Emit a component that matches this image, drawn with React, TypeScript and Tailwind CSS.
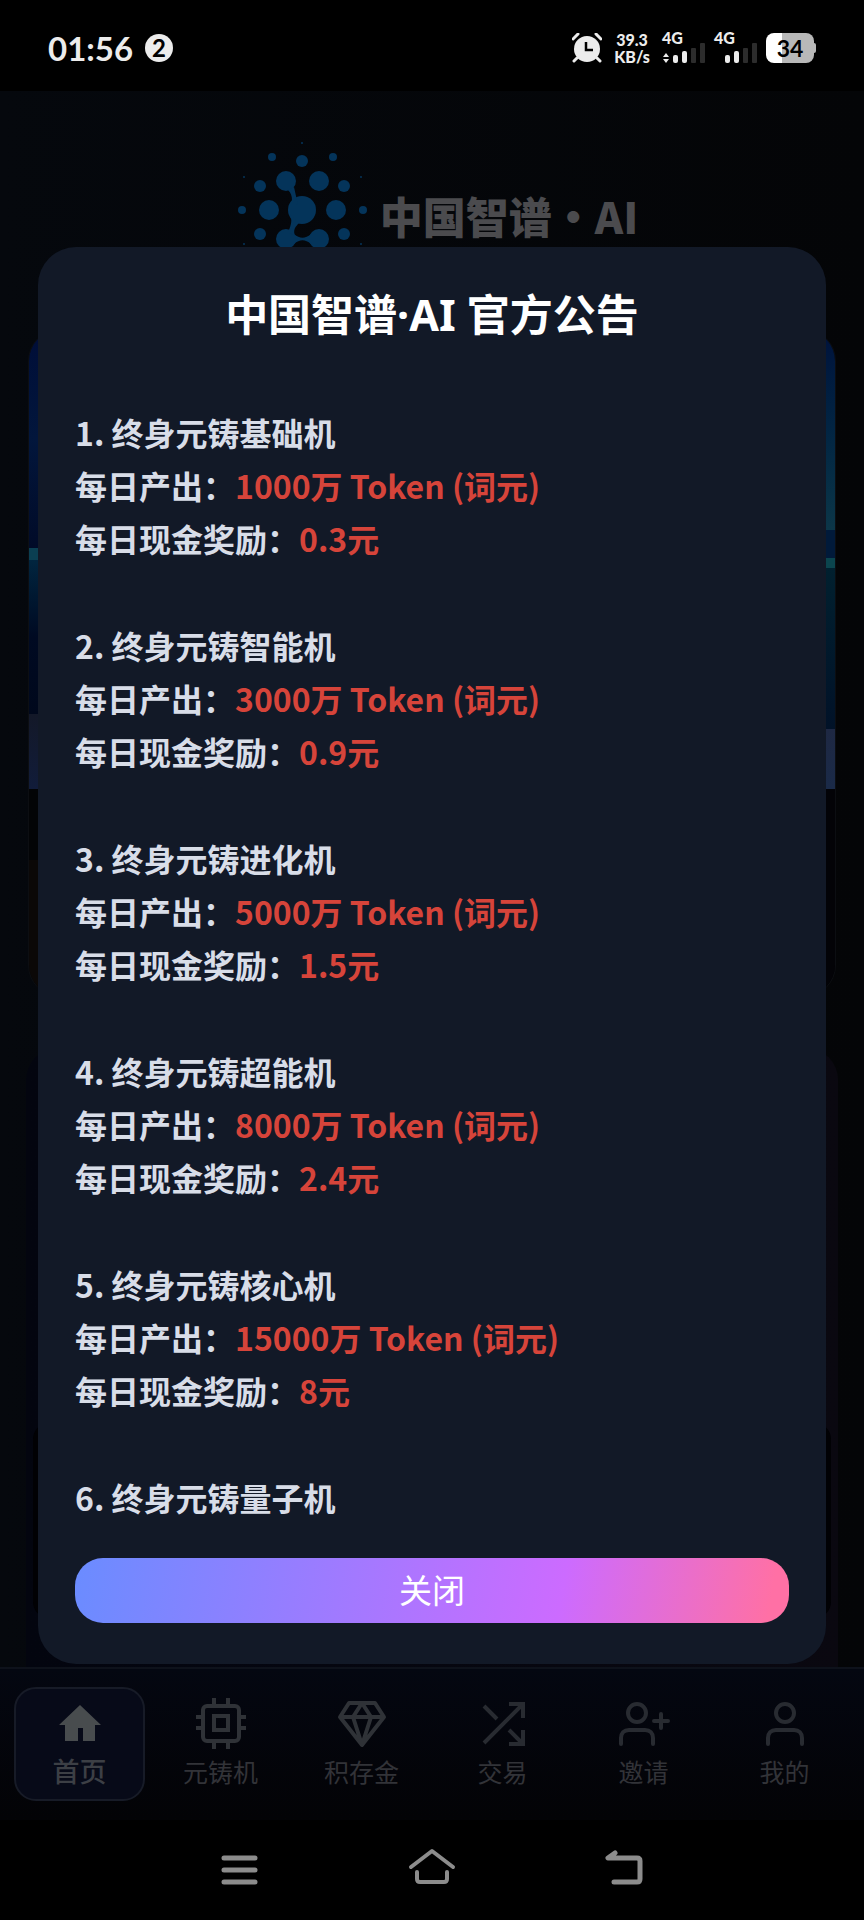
import React, { useState } from 'react';

const machines = [
  { nome: '终身元铸基础机', token: '1000万', cash: '0.3元' },
  { nome: '终身元铸智能机', token: '3000万', cash: '0.9元' },
  { nome: '终身元铸进化机', token: '5000万', cash: '1.5元' },
  { nome: '终身元铸超能机', token: '8000万', cash: '2.4元' },
  { nome: '终身元铸核心机', token: '15000万', cash: '8元' },
  { nome: '终身元铸量子机' },
];

const dots = [
  [302, 143, 1], [272, 157, 4], [333, 157, 4], [302, 161, 6], [286, 181, 10], [319, 181, 10],
  [260, 186, 6], [344, 186, 6], [244, 177, 1], [361, 177, 1], [302, 210, 14], [269, 210, 10],
  [336, 210, 10], [242, 210, 4], [363, 210, 4], [260, 234, 6], [344, 234, 6], [286, 239, 10],
  [319, 239, 10], [244, 244, 1], [361, 244, 1], [302, 259, 6], [272, 263, 4], [333, 263, 4],
];

const Logo = () => (
  <svg className="h-36 w-[130px]" viewBox="238 139 130 144" fill="#04345a">
    {dots.map(([x, y, r]) => (
      <circle key={`${x}-${y}`} cx={x} cy={y} r={r} />
    ))}
    <path d="M288 190c3 3 4 6 4 11l6 4-4-18zM290 214c2 5 2 10-2 18l7 4c-2-6 0-9 4-13zM294 234c6 5 11 5 17 0v10c-6-5-11-5-17 0z" />
  </svg>
);

const AlarmIcon = () => (
  <svg className="h-[30px] w-[30px]" viewBox="0 0 30 30" fill="none">
    <circle cx="15" cy="16" r="13" fill="#ececec" />
    <path d="M5 25l-3 3M25 25l3 3M1 6l5-5M29 6l-5-5" stroke="#ececec" strokeWidth="3" strokeLinecap="round" />
    <path d="M14 9v8h7" stroke="#000" strokeWidth="2.5" />
  </svg>
);

const Signal = ({ data }: { data?: boolean }) => (
  <div className="flex w-[44px] flex-col">
    <span className="h-[10px] text-[16px] leading-[10px] font-black">4G</span>
    <svg className="h-5 w-[44px]" viewBox="0 0 44 20">
      {data && <path d="M1 14l3-4 3 4zM1 16h6l-3 4z" fill="#ececec" />}
      <rect x="11" y="12" width="5" height="8" rx="2" fill="#ececec" />
      <rect x="20" y="8" width="5" height="12" rx="2" fill="#ececec" />
      <rect x="29" y="5" width="5" height="15" rx="1" fill="#2c2c2c" />
      <rect x="38" y="0" width="5" height="20" rx="1" fill="#2c2c2c" />
    </svg>
  </div>
);

const StatusBar = () => (
  <header className="flex h-[91px] items-center justify-between bg-black px-12 pt-1 font-['Lato','Noto_Sans_CJK_SC',sans-serif] text-[#ececec]">
    <div className="flex items-center gap-3">
      <span className="text-[33px] leading-[40px] font-bold">01:56</span>
      <span className="flex h-7 w-7 items-center justify-center rounded-full bg-[#ececec] text-2xl leading-7 font-bold text-black">2</span>
    </div>
    <div className="flex items-center">
      <AlarmIcon />
      <div className="ml-3 flex w-9 flex-col items-center text-[16px] leading-[17px] font-black">
        <span>39.3</span>
        <span>KB/s</span>
      </div>
      <div className="ml-3 flex gap-2">
        <Signal data />
        <Signal />
      </div>
      <div className="ml-2 flex items-center">
        <div className="flex h-[30px] w-12 items-center justify-center rounded-lg bg-linear-to-r from-white from-34% to-[#b8b8b8] to-34% text-[23px] leading-[30px] font-bold text-black">34</div>
        <div className="h-[10px] w-[2px] rounded-r bg-[#b8b8b8]" />
      </div>
    </div>
  </header>
);

const HomeIcon = () => (
  <svg className="h-[52px] w-[52px]" viewBox="0 0 52 52" fill="#484c4e">
    <path d="M26 8L5 28h6v16h13V31h5v13h12V28h6z" />
  </svg>
);

const ChipIcon = () => (
  <svg className="h-[52px] w-[52px]" viewBox="0 0 52 52" fill="none" stroke="#2f3237" strokeWidth="4">
    <rect x="8" y="9" width="36" height="35" rx="4" />
    <rect x="19" y="19" width="14" height="14" />
    <path d="M19 1v8M33 1v8M19 44v8M33 44v8M1 20h7M1 31h7M44 20h7M44 31h7" />
  </svg>
);

const GemIcon = () => (
  <svg className="h-[52px] w-[52px]" viewBox="0 0 52 52" fill="none" stroke="#2f3237" strokeWidth="4" strokeLinejoin="round">
    <path d="M13 6h26l9 14-22 28L4 20zM4 20h44M26 6l-9 14 9 28 9-28z" />
  </svg>
);

const TradeIcon = () => (
  <svg className="h-[52px] w-[52px]" viewBox="0 0 52 52" fill="none" stroke="#282b31" strokeWidth="4">
    <path d="M7 9l13 13M7 46L45 8M32 7h14v14M32 33l13 13M32 47h14V33" />
  </svg>
);

const InviteIcon = () => (
  <svg className="h-[52px] w-[52px]" viewBox="0 0 52 52" fill="none" stroke="#282b31" strokeWidth="4" strokeLinecap="round">
    <circle cx="19" cy="16" r="9" />
    <path d="M3 47v-6c0-5 3-8 8-8h16c5 0 8 3 8 8v6M43 17v14M36 24h14" />
  </svg>
);

const UserIcon = () => (
  <svg className="h-[52px] w-[52px]" viewBox="0 0 52 52" fill="none" stroke="#282b31" strokeWidth="4" strokeLinecap="round">
    <circle cx="26" cy="16" r="9" />
    <path d="M9 47v-6c0-5 3-8 8-8h18c5 0 8 3 8 8v6" />
  </svg>
);

const tabs = [
  { label: '首页', icon: <HomeIcon /> },
  { label: '元铸机', icon: <ChipIcon /> },
  { label: '积存金', icon: <GemIcon /> },
  { label: '交易', icon: <TradeIcon /> },
  { label: '邀请', icon: <InviteIcon /> },
  { label: '我的', icon: <UserIcon /> },
];

const App: React.FC = () => {
  const [open, setOpen] = useState(true);
  const [active, setActive] = useState('首页');

  return (
    <div className="flex min-h-screen flex-col bg-black font-['Noto_Sans_CJK_SC',sans-serif]">
      <StatusBar />

      <div className="relative flex flex-1 flex-col bg-linear-to-r from-[#05080d] to-[#040507]">
        <div className="flex items-center justify-center gap-3 pt-12 pl-3">
          <Logo />
          <h1 className="pt-2 text-[43px] leading-[64px] font-black text-[#4b4b4e]">中国智谱・AI</h1>
        </div>

        {/* banner + card behind the dialog */}
        <div className="mx-7 mt-[46px] flex h-[668px] overflow-hidden rounded-[32px] border border-[#0c0e12]">
          <div className="flex w-1/2 flex-col">
            <div className="h-[218px] bg-linear-to-b from-[#000d38] via-[#02163c] to-[#010b28]" />
            <div className="h-3 bg-[#0b3f52]" />
            <div className="h-[154px] bg-linear-to-b from-[#01253f] via-[#000a22] to-[#00081c]" />
            <div className="h-[75px] bg-linear-to-b from-[#131828] to-[#111c3a]" />
            <div className="h-[71px] bg-[#030406]" />
            <div className="flex-1 bg-[#0b0807]" />
          </div>
          <div className="flex w-1/2 flex-col">
            <div className="h-[200px] bg-linear-to-b from-[#00123c] to-[#0c3648]" />
            <div className="h-7 bg-[#011a3a]" />
            <div className="h-[10px] bg-[#0b454e]" />
            <div className="h-[161px] bg-linear-to-b from-[#01202f] to-[#011228]" />
            <div className="h-[60px] bg-linear-to-b from-[#1e2843] to-[#1a2a48]" />
            <div className="flex-1 bg-[#030307]" />
          </div>
        </div>
        <div className="mx-[26px] mt-[51px] flex-1 rounded-t-[32px] bg-linear-to-r from-[#03050f] to-[#0a0810] px-[7px] pt-[375px]">
          <div className="h-[195px] rounded-2xl bg-[#010104]" />
        </div>

        <nav className="flex h-[153px] gap-[10px] border-t-2 border-[#0e121b] bg-linear-to-b from-[#040711] to-[#030306] px-[14px] pt-[18px]">
          {tabs.map((tab) => (
            <button
              key={tab.label}
              type="button"
              onClick={() => setActive(tab.label)}
              className={`flex h-[114px] flex-1 flex-col items-center rounded-[22px] border-2 pt-2 ${
                active === tab.label
                  ? 'border-[#171b27] bg-[#070a18] text-[27px] font-medium text-[#3c3f45]'
                  : 'border-transparent text-[25px] text-[#323338]'
              }`}
            >
              {tab.icon}
              <span className="mt-[6px] leading-8">{tab.label}</span>
            </button>
          ))}
        </nav>

        {open && (
          <div className="absolute inset-0 flex items-center justify-center px-[38px]">
            <div
              role="dialog"
              aria-labelledby="notice-title"
              className="flex h-[82%] w-full flex-col rounded-[38px] bg-[#121927] px-[37px] pt-[38px] pb-[41px]"
            >
              <h2 id="notice-title" className="text-center font-['Noto_Sans','Noto_Sans_CJK_SC',sans-serif] text-[43px] leading-[60px] font-bold text-white">
                中国智谱·AI 官方公告
              </h2>
              <ol className="mt-[61px] flex flex-1 flex-col gap-[54px] overflow-y-auto text-[32px] leading-[53px] font-bold text-[#d8dde8] [scrollbar-width:none]">
                {machines.map((m, i) => (
                  <li key={m.nome}>
                    <p>{i + 1}. {m.nome}</p>
                    {m.token && (
                      <>
                        <p>每日产出：<span className="text-[#d6443a]">{m.token} Token (词元)</span></p>
                        <p>每日现金奖励：<span className="text-[#d6443a]">{m.cash}</span></p>
                      </>
                    )}
                  </li>
                ))}
              </ol>
              <button
                type="button"
                onClick={() => setOpen(false)}
                className="h-[65px] rounded-[28px] bg-[linear-gradient(100deg,#6a8cff_0%,#cc6bff_68%,#ff70a5_97%)] pb-1 text-[33px] leading-[60px] text-white"
              >
                关闭
              </button>
            </div>
          </div>
        )}
      </div>

      <footer className="flex h-[100px] items-center justify-center gap-36 bg-black">
        <button type="button" aria-label="菜单">
          <svg className="h-12 w-12" viewBox="0 0 48 48" stroke="#8c8c8c" strokeWidth="5" strokeLinecap="round">
            <path d="M8 12h31M8 24h31M8 36h31" />
          </svg>
        </button>
        <button type="button" aria-label="主页">
          <svg className="h-12 w-12" viewBox="0 0 48 48" fill="none" stroke="#8c8c8c" strokeWidth="4" strokeLinecap="round" strokeLinejoin="round">
            <path d="M3 21L24 5l21 16M9 26v7q0 3 3 3h24q3 0 3-3v-7" />
          </svg>
        </button>
        <button type="button" aria-label="返回">
          <svg className="h-12 w-12" viewBox="0 0 48 48" fill="none" stroke="#8c8c8c" strokeWidth="5" strokeLinecap="round" strokeLinejoin="round">
            <path d="M15 7L8 12h29q3 0 3 3v18q0 3-3 3H14" />
          </svg>
        </button>
      </footer>
    </div>
  );
};

export default App;
